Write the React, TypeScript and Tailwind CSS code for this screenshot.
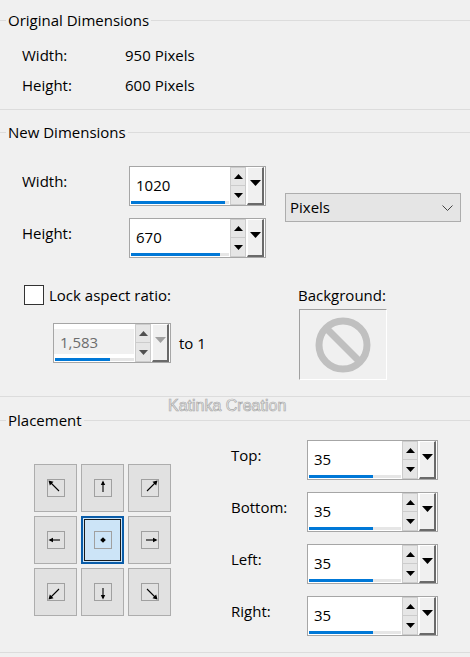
import React from "react";

function GroupHeader({ title }: { title: string }) {
  return (
    <div className="flex h-[20px] items-center">
      <div className="h-px w-[6px] bg-[#dcdcdc]" />
      <span className="px-[2px] leading-[20px]">{title}</span>
      <div className="h-px flex-1 bg-[#dcdcdc]" />
    </div>
  );
}

function UpTri({ color }: { color: string }) {
  return (
    <svg width="9" height="5" viewBox="0 0 9 5">
      <polygon points="4.5,0 9,5 0,5" fill={color} />
    </svg>
  );
}
function DownTri({ color }: { color: string }) {
  return (
    <svg width="9" height="5" viewBox="0 0 9 5">
      <polygon points="0,0 9,0 4.5,5" fill={color} />
    </svg>
  );
}

function SpinBox({
  value,
  boxW,
  fillW,
  disabled,
}: {
  value: string;
  boxW: string;
  fillW: number;
  disabled?: boolean;
}) {
  const tri = disabled ? "#505050" : "#000000";
  return (
    <div className={`flex h-[40px] border border-[#a6a6a6] bg-white ${boxW}`}>
      <div className="flex min-w-0 flex-1 flex-col">
        {disabled ? (
          <div className="mt-[5px] flex h-[25px] items-center bg-[#f0f0f0] pl-[6px] pt-[2px] text-[15px] text-[#6d6d6d]">
            {value}
          </div>
        ) : (
          <div className="flex h-[30px] items-center pl-[6px] pt-[6px] text-[15px]">{value}</div>
        )}
        <div className="flex-1" />
        <div className="mb-[1px] ml-[1px] h-[3px] bg-[#e6e6e6]">
          <div className="h-full bg-[#0078d7]" style={{ width: fillW }} />
        </div>
      </div>
      <div className="ml-[1px] flex w-[16px] flex-col">
        <div className="flex h-[19px] items-center justify-center border border-[#cccccc] bg-[#e6e6e6]">
          <UpTri color={tri} />
        </div>
        <div className="flex h-[19px] items-center justify-center border border-t-0 border-[#cccccc] bg-[#e6e6e6]">
          <DownTri color={tri} />
        </div>
      </div>
      <div className="ml-[1px] mr-[1px] flex w-[17px] justify-center border-b-2 border-l border-r-2 border-t border-b-[#6a6a6a] border-l-[#ffffff] border-r-[#6a6a6a] border-t-[#ffffff] bg-[#f0f0f0] pt-[12px]">
        <svg width="11" height="6" viewBox="0 0 11 6">
          <polygon points="0,0 11,0 5.5,6" fill={disabled ? "#a0a0a0" : "#000000"} />
        </svg>
      </div>
    </div>
  );
}

type Dir = "nw" | "n" | "ne" | "w" | "c" | "e" | "sw" | "s" | "se";

function Arrow({ dir }: { dir: Dir }) {
  const lines: Record<Dir, [number, number, number, number] | null> = {
    nw: [11, 11, 2, 2],
    n: [8, 12, 8, 2],
    ne: [5, 11, 14, 2],
    w: [12, 8, 2, 8],
    c: null,
    e: [4, 8, 14, 8],
    sw: [11, 5, 2, 14],
    s: [8, 4, 8, 14],
    se: [5, 5, 14, 14],
  };
  const heads: Record<Dir, string> = {
    nw: "0.5,0.5 5.5,1.8 1.8,5.5",
    n: "8,0.5 5.8,5 10.2,5",
    ne: "15.5,0.5 10.5,1.8 14.2,5.5",
    w: "0.5,8 5,5.8 5,10.2",
    c: "8,5.2 10.8,8 8,10.8 5.2,8",
    e: "15.5,8 11,5.8 11,10.2",
    sw: "0.5,15.5 1.8,10.5 5.5,14.2",
    s: "8,15.5 5.8,11 10.2,11",
    se: "15.5,15.5 14.2,10.5 10.5,14.2",
  };
  const l = lines[dir];
  return (
    <svg width="16" height="16" viewBox="0 0 16 16">
      {l && <line x1={l[0]} y1={l[1]} x2={l[2]} y2={l[3]} stroke="#000" strokeWidth="1.1" />}
      <polygon points={heads[dir]} fill="#000" />
    </svg>
  );
}

function PlaceBtn({ dir }: { dir: Dir }) {
  if (dir === "c") {
    return (
      <div className="flex h-[48px] border-2 border-[#0a5ca8] bg-[#cce4f7]">
        <div className="m-[1px] flex flex-1 items-center justify-center border border-[#1a1a1a]">
          <div className="flex h-[18px] w-[18px] items-center justify-center border border-[#a0a0a0]">
            <Arrow dir={dir} />
          </div>
        </div>
      </div>
    );
  }
  return (
    <div className="flex h-[48px] items-center justify-center border border-[#adadad] bg-[#e1e1e1]">
      <div className="flex h-[18px] w-[18px] items-center justify-center border border-[#a0a0a0]">
        <Arrow dir={dir} />
      </div>
    </div>
  );
}

export default function App() {
  const dirs: Dir[] = ["nw", "n", "ne", "w", "c", "e", "sw", "s", "se"];
  const margins = ["Top:", "Bottom:", "Left:", "Right:"];
  return (
    <div className="relative h-[657px] w-[470px] overflow-hidden bg-[#f0f0f0] font-['Open_Sans','Noto_Sans',sans-serif] text-[15px] text-black">
      <div className="flex flex-col">
        {/* Original Dimensions */}
        <div className="mt-[10px]">
          <GroupHeader title="Original Dimensions" />
        </div>
        <div className="mt-[10px] flex h-[30px] items-center pl-[22px]">
          <span className="w-[103px]">Width:</span>
          <span>950 Pixels</span>
        </div>
        <div className="flex h-[30px] items-center pl-[22px]">
          <span className="w-[103px]">Height:</span>
          <span>600 Pixels</span>
        </div>
        <div className="mt-[9px] h-px bg-[#dcdcdc]" />

        {/* New Dimensions */}
        <div className="mt-[12px]">
          <GroupHeader title="New Dimensions" />
        </div>
        <div className="mt-[24px] flex">
          <div className="flex flex-col gap-[12px] pl-[22px]">
            <div className="flex">
              <span className="flex h-[30px] w-[107px] items-center">Width:</span>
              <SpinBox value="1020" boxW="w-[137px]" fillW={94} />
            </div>
            <div className="flex">
              <span className="flex h-[30px] w-[107px] items-center">Height:</span>
              <SpinBox value="670" boxW="w-[137px]" fillW={89} />
            </div>
          </div>
          <div className="ml-[19px] pt-[27px]">
            <div className="flex h-[29px] w-[176px] items-center justify-between border border-[#adadad] bg-[#e5e5e5] pl-[4px] pr-[7px]">
              <span>Pixels</span>
              <svg width="11" height="6" viewBox="0 0 11 6">
                <polyline points="0.5,0.5 5.5,5.5 10.5,0.5" fill="none" stroke="#444" strokeWidth="1" />
              </svg>
            </div>
          </div>
        </div>

        <div className="mt-[27px] flex">
          <div className="w-[298px] pl-[24px]">
            <div className="flex h-[20px] items-center">
              <div className="h-[20px] w-[20px] border border-[#333333] bg-white" />
              <span className="ml-[5px]">Lock aspect ratio:</span>
            </div>
            <div className="mt-[18px] flex items-center pl-[29px]">
              <SpinBox value="1,583" boxW="w-[118px]" fillW={55} disabled />
              <span className="ml-[8px]">to 1</span>
            </div>
          </div>
          <div className="flex flex-col">
            <span className="h-[20px] leading-[20px]">Background:</span>
            <div className="ml-[1px] mt-[4px] flex h-[71px] w-[88px] items-center justify-center border-b border-l border-r border-t border-b-white border-l-[#a0a0a0] border-r-white border-t-[#a0a0a0]">
              <svg width="58" height="58" viewBox="0 0 58 58">
                <circle cx="29" cy="29" r="24" fill="none" stroke="#c0c0c0" strokeWidth="7" />
                <line x1="12" y1="12" x2="46" y2="46" stroke="#c0c0c0" strokeWidth="7" />
              </svg>
            </div>
          </div>
        </div>
        <div className="mt-[16px] h-px bg-[#dcdcdc]" />

        {/* Placement */}
        <div className="mt-[13px]">
          <GroupHeader title="Placement" />
        </div>
        <div className="mt-[10px] flex">
          <div className="w-[231px] pl-[34px] pt-[24px]">
            <div className="grid grid-cols-[43px_43px_43px] gap-x-[4px] gap-y-[4px]">
              {dirs.map((d) => (
                <PlaceBtn key={d} dir={d} />
              ))}
            </div>
          </div>
          <div className="flex flex-col gap-[12px]">
            {margins.map((m) => (
              <div key={m} className="flex">
                <span className="flex h-[30px] w-[76px] items-center">{m}</span>
                <SpinBox value="35" boxW="w-[131px]" fillW={64} />
              </div>
            ))}
          </div>
        </div>
        <div className="mt-[16px] h-px bg-[#dcdcdc]" />
      </div>

      <div className="absolute left-[168px] top-[397px] font-['Liberation_Sans',sans-serif] text-[16px] leading-[18px] text-[#f6f6f6] [-webkit-text-stroke:0.7px_#a8a8a8]">
        Katinka Creation
      </div>
    </div>
  );
}
